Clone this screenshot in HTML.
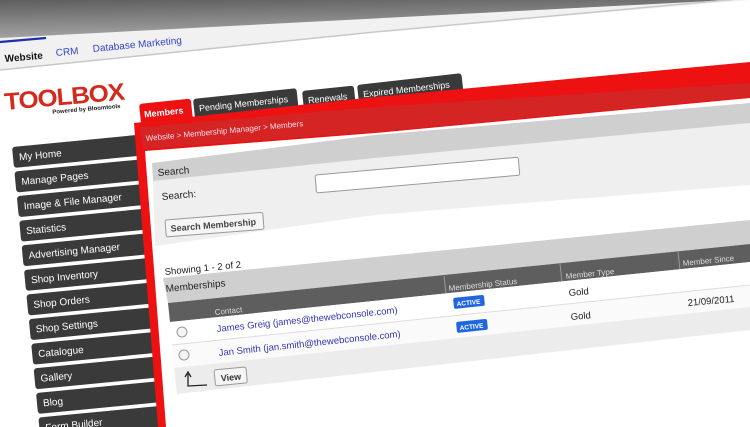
<!DOCTYPE html>
<html><head><meta charset="utf-8"><style>
html,body{margin:0;padding:0;background:#fff;width:750px;height:427px;overflow:hidden}
svg{display:block;font-family:"Liberation Sans",Arial,sans-serif}
</style></head><body>
<svg width="750" height="427" viewBox="0 0 750 427" xmlns="http://www.w3.org/2000/svg">
<defs>
<linearGradient id="tg" x1="0" y1="0" x2="0.3" y2="1">
<stop offset="0" stop-color="#5e5e5e"/><stop offset="1" stop-color="#a8a8a8"/></linearGradient>
</defs>
<rect width="750" height="427" fill="#fff"/>
<polygon points="0,36 750,-30 750,0 375,32 0,70" fill="#f1f1f1"/>
<polygon points="0,0 730,0 0,38" fill="url(#tg)"/>
<polyline points="0,70 375,32 750,-2" fill="none" stroke="#c8c8c8" stroke-width="1.5"/>
<line x1="0" y1="42" x2="46" y2="38" stroke="#1f2fa8" stroke-width="2.2"/>
<g transform="translate(5,62) rotate(-5)"><text font-size="10" font-weight="bold" fill="#111">Website</text></g>
<g transform="translate(56,56) rotate(-5)"><text font-size="10" fill="#3344cc">CRM</text></g>
<g transform="translate(93,52) rotate(-5.5)"><text font-size="10" fill="#3344cc">Database Marketing</text></g>
<g transform="translate(5,110) rotate(-5)"><text font-size="24" font-weight="bold" fill="#d42a1e" textLength="120" lengthAdjust="spacingAndGlyphs" letter-spacing="-1">TOOLBOX</text>
<text x="47" y="8" font-size="6" font-weight="bold" fill="#222">Powered by Bloomtools</text></g>
<g font-size="10" fill="#fff">
<g transform="translate(12,147) rotate(-5.5)"><rect width="150" height="21" rx="3" fill="#3a3a3a"/><text x="6" y="14">My Home</text></g>
<g transform="translate(14.4,171.6) rotate(-5.5)"><rect width="150" height="21" rx="3" fill="#3a3a3a"/><text x="6" y="14">Manage Pages</text></g>
<g transform="translate(16.8,196.2) rotate(-5.5)"><rect width="150" height="21" rx="3" fill="#3a3a3a"/><text x="6" y="14">Image &amp; File Manager</text></g>
<g transform="translate(19.2,220.8) rotate(-5.5)"><rect width="150" height="21" rx="3" fill="#3a3a3a"/><text x="6" y="14">Statistics</text></g>
<g transform="translate(21.6,245.4) rotate(-5.5)"><rect width="150" height="21" rx="3" fill="#3a3a3a"/><text x="6" y="14">Advertising Manager</text></g>
<g transform="translate(24,270) rotate(-5.5)"><rect width="150" height="21" rx="3" fill="#3a3a3a"/><text x="6" y="14">Shop Inventory</text></g>
<g transform="translate(26.4,294.6) rotate(-5.5)"><rect width="150" height="21" rx="3" fill="#3a3a3a"/><text x="6" y="14">Shop Orders</text></g>
<g transform="translate(28.8,319.2) rotate(-5.5)"><rect width="150" height="21" rx="3" fill="#3a3a3a"/><text x="6" y="14">Shop Settings</text></g>
<g transform="translate(31.2,343.8) rotate(-5.5)"><rect width="150" height="21" rx="3" fill="#3a3a3a"/><text x="6" y="14">Catalogue</text></g>
<g transform="translate(33.6,368.4) rotate(-5.5)"><rect width="150" height="21" rx="3" fill="#3a3a3a"/><text x="6" y="14">Gallery</text></g>
<g transform="translate(36,393) rotate(-5.5)"><rect width="150" height="21" rx="3" fill="#3a3a3a"/><text x="6" y="14">Blog</text></g>
<g transform="translate(38.4,417.6) rotate(-5.5)"><rect width="150" height="21" rx="3" fill="#3a3a3a"/><text x="6" y="14">Form Builder</text></g>
</g>
<g font-size="9" fill="#fff">
<g transform="translate(193,99) rotate(-6)"><rect width="104" height="22" rx="3" fill="#3a3a3a"/><text x="5" y="13">Pending Memberships</text></g>
<g transform="translate(302,91) rotate(-6)"><rect width="52" height="22" rx="3" fill="#3a3a3a"/><text x="5" y="13">Renewals</text></g>
<g transform="translate(357,85) rotate(-6.5)"><rect width="105" height="22" rx="3" fill="#3a3a3a"/><text x="5" y="13">Expired Memberships</text></g>
</g>
<polygon points="134,123 375,97 750,62 750,427 158,427" fill="#ee1111"/>
<g transform="translate(139,104) rotate(-6)"><rect width="52" height="24" rx="3" fill="#ee1111"/><text x="4" y="14" font-size="9" font-weight="bold" fill="#fff">Members</text></g>
<polygon points="140,127 375,107 750,83 750,97 375,132 143,149" fill="#d42424"/>
<g transform="translate(146,141) rotate(-5.4)"><text font-size="8" fill="#fde">Website &gt; Membership Manager &gt; Members</text></g>
<polygon points="145,151 375,133 750,98 750,427 166,427" fill="#fff"/>
<polygon points="153,181 375,158 750,123 750,185 375,215 155,246" fill="#efefef"/>
<polygon points="152,163 375,135 750,103 750,123 375,158 153,181" fill="#cfcfcf"/>
<g transform="translate(158,176) rotate(-5)"><text font-size="10" fill="#222">Search</text></g>
<g transform="translate(162,200) rotate(-5)"><text font-size="10" fill="#222">Search:</text></g>
<g transform="translate(315,175) rotate(-5)"><rect width="204" height="18" rx="2" fill="#fff" stroke="#999"/></g>
<g transform="translate(165,220) rotate(-4.5)"><rect width="98" height="17" rx="2" fill="#f5f5f5" stroke="#999"/><text x="5" y="12" font-size="9" font-weight="bold" fill="#444">Search Membership</text></g>
<g transform="translate(165,275) rotate(-5.5)"><text font-size="9.5" fill="#222">Showing 1 - 2 of 2</text></g>
<polygon points="163,278 750,220 750,244 168,303" fill="#cfcfcf"/>
<polygon points="168,303 750,244 750,262 170,322" fill="#5e5e5e"/>
<g transform="translate(166,292) rotate(-5.5)"><text font-size="10" fill="#222">Memberships</text></g>
<g stroke="#999" stroke-width="1"><line x1="444" y1="276" x2="446" y2="294"/><line x1="560" y1="264" x2="562" y2="282"/><line x1="678" y1="252" x2="680" y2="270"/></g>
<g font-size="8" fill="#ddd">
<g transform="translate(215,315) rotate(-6)"><text>Contact</text></g>
<g transform="translate(449,291) rotate(-6)"><text>Membership Status</text></g>
<g transform="translate(566,279) rotate(-6)"><text>Member Type</text></g>
<g transform="translate(683,266) rotate(-6)"><text>Member Since</text></g>
</g>
<polygon points="170,322 750,262 750,285 172,345" fill="#fff"/>
<polygon points="172,345 750,285 750,307 174,368" fill="#fafafa"/>
<polyline points="172,345 750,285" stroke="#ddd" fill="none"/>
<polygon points="174,368 750,307 750,330 177,394" fill="#ececec"/>
<circle cx="182" cy="332" r="5" fill="#f4f4f4" stroke="#999"/>
<circle cx="184" cy="355" r="5" fill="#f4f4f4" stroke="#999"/>
<g font-size="9.5" fill="#3333bb">
<g transform="translate(217,332) rotate(-6)"><text>James Greig (james@thewebconsole.com)</text></g>
<g transform="translate(219,356) rotate(-6)"><text>Jan Smith (jan.smith@thewebconsole.com)</text></g>
</g>
<g transform="translate(453,298) rotate(-6)"><rect width="31" height="11" rx="2" fill="#1f66e0"/><text x="3" y="8.5" font-size="6.5" font-weight="bold" fill="#fff">ACTIVE</text></g>
<g transform="translate(456,322) rotate(-6)"><rect width="31" height="11" rx="2" fill="#1f66e0"/><text x="3" y="8.5" font-size="6.5" font-weight="bold" fill="#fff">ACTIVE</text></g>
<g font-size="9.5" fill="#222">
<g transform="translate(569,296) rotate(-5)"><text>Gold</text></g>
<g transform="translate(571,320) rotate(-5)"><text>Gold</text></g>
<g transform="translate(688,306) rotate(-5)"><text>21/09/2011</text></g>
</g>
<path d="M188,374 L188,386 L207,385 M185,377 L188,372 L191,377" fill="none" stroke="#222" stroke-width="1.3"/>
<g transform="translate(214,370) rotate(-5.5)"><rect width="32" height="16" rx="2" fill="#f5f5f5" stroke="#999"/><text x="6" y="12" font-size="9" font-weight="bold" fill="#333">View</text></g>
</svg>
</body></html>
